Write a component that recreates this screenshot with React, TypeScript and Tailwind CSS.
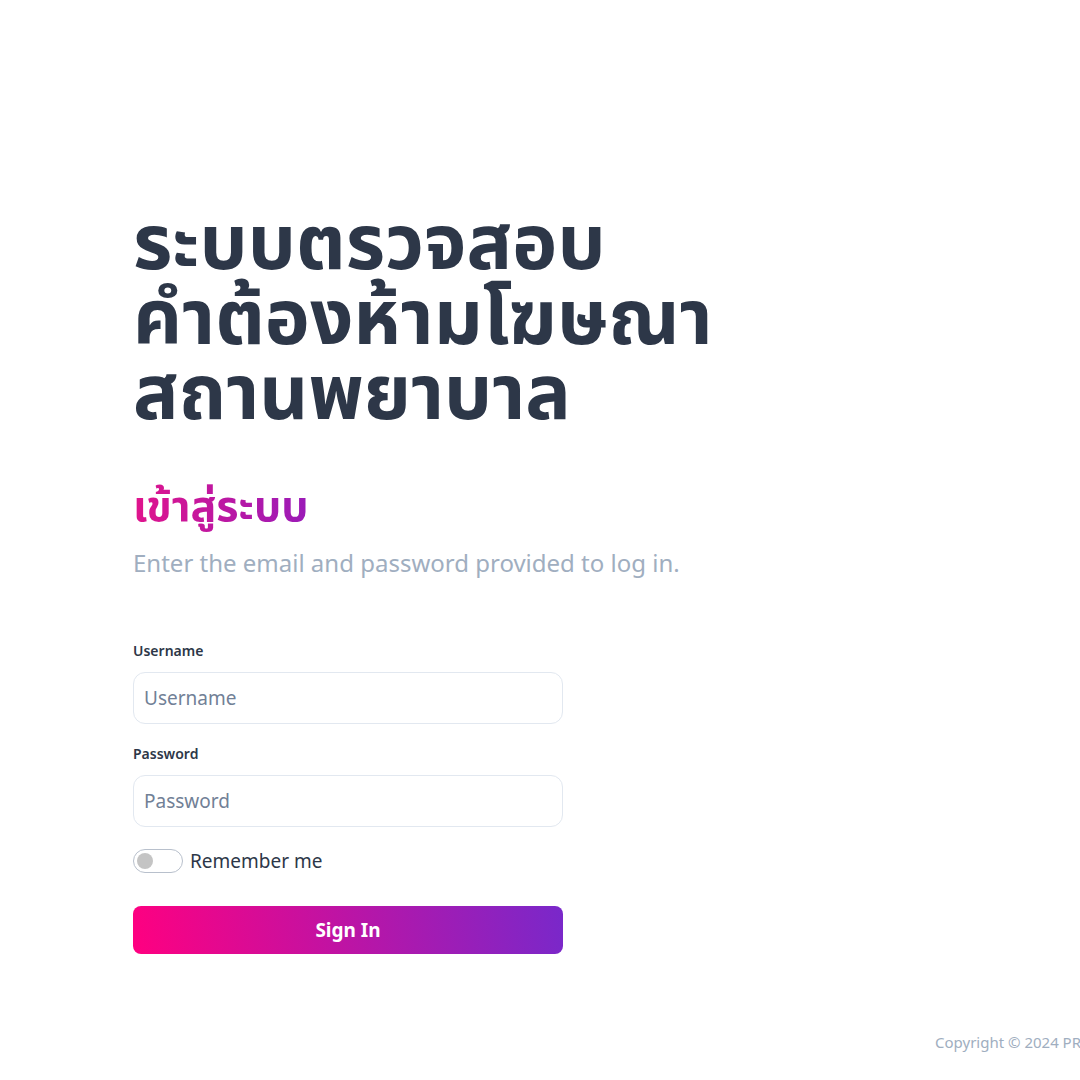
import { useState } from "react";

export default function App() {
  const [remember, setRemember] = useState(false);

  return (
    <div className="relative h-[1080px] w-[1080px] overflow-hidden bg-white font-['Noto_Sans','Noto_Sans_Thai','Noto_Sans_Thai_UI',sans-serif]">
      <div className="flex flex-col pl-[133px] pt-[208px]">
        <h1 className="font-['Noto_Sans_Thai','Noto_Sans_Thai_UI','Noto_Sans',sans-serif] text-[76px] font-bold leading-[75px] text-[#2d3748]">
          ระบบตรวจสอบ
          <br />
          คำต้องห้ามโฆษณา
          <br />
          สถานพยาบาล
        </h1>

        <h2 className="mt-[49px] w-fit bg-[linear-gradient(90deg,#e0148c,#9a1bb8)] bg-clip-text font-['Noto_Sans_Thai','Noto_Sans_Thai_UI','Noto_Sans',sans-serif] text-[43px] font-bold leading-[52px] text-transparent">
          เข้าสู่ระบบ
        </h2>
        <p className="mt-[14px] text-[24px] leading-[30px] text-[#a0aec0]">
          Enter the email and password provided to log in.
        </p>

        <form className="mt-[63px] flex w-[430px] flex-col" onSubmit={(e) => e.preventDefault()}>
          <label className="text-[14px] font-semibold leading-[20px] text-[#2d3748]">Username</label>
          <input
            type="text"
            placeholder="Username"
            className="mt-[11px] h-[52px] rounded-xl border border-[#e2e8f0] px-[10px] text-[19px] text-[#2d3748] outline-none placeholder:text-[#718096]"
          />
          <label className="mt-[20px] text-[14px] font-semibold leading-[20px] text-[#2d3748]">Password</label>
          <input
            type="password"
            placeholder="Password"
            className="mt-[11px] h-[52px] rounded-xl border border-[#e2e8f0] px-[10px] text-[19px] text-[#2d3748] outline-none placeholder:text-[#718096]"
          />

          <div className="mt-[22px] flex items-center gap-[7px]">
            <button
              type="button"
              onClick={() => setRemember(!remember)}
              className="flex h-[24px] w-[50px] items-center rounded-full border border-[#b8c0cc] bg-white px-[3px]"
            >
              <span className={`block h-[16px] w-[16px] rounded-full ${remember ? "translate-x-[26px] bg-[#d6168f]" : "bg-[#c4c4c4]"}`} />
            </button>
            <span className="text-[19px] leading-[24px] text-[#2d3748]">Remember me</span>
          </div>

          <button
            type="submit"
            className="mt-[33px] h-[48px] rounded-lg bg-[linear-gradient(81deg,#ff0080,#7928ca)] text-[19px] font-bold text-white"
          >
            Sign In
          </button>
        </form>
      </div>

      <div className="absolute bottom-[28px] left-[935px] whitespace-nowrap text-[15px] leading-[20px] text-[#a0aec0]">
        Copyright © 2024 PRD Health. All rights reserved.
      </div>
    </div>
  );
}
